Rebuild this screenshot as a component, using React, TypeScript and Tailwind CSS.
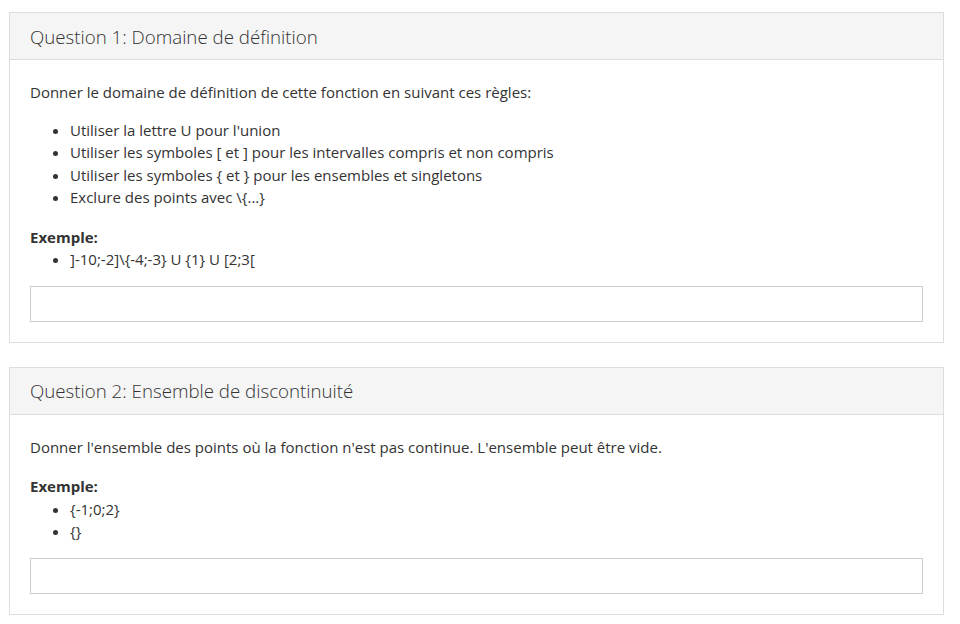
const questions = [
    {
        title: "Question 1: Domaine de définition",
        intro: "Donner le domaine de définition de cette fonction en suivant ces règles:",
        rules: [
            "Utiliser la lettre U pour l'union",
            "Utiliser les symboles [ et ] pour les intervalles compris et non compris",
            "Utiliser les symboles { et } pour les ensembles et singletons",
            "Exclure des points avec \\{...}",
        ],
        examples: ["]-10;-2]\\{-4;-3} U {1} U [2;3["],
    },
    {
        title: "Question 2: Ensemble de discontinuité",
        intro: "Donner l'ensemble des points où la fonction n'est pas continue. L'ensemble peut être vide.",
        rules: [],
        examples: ["{-1;0;2}", "{}"],
    },
];

const QuestionPanel = ({ q }: { q: (typeof questions)[number] }) => {
    return (
        <div className="bg-white border border-[#dddddd]">
            <div className="h-[47px] flex items-center px-5 pt-[2px] bg-[#f5f5f5] border-b border-[#dddddd]">
                <h3 className="text-[18.7px] font-light text-[#333333]">{q.title}</h3>
            </div>
            <div className="px-5 pt-[21px] pb-5 text-[15px] leading-[22.5px] text-[#333333]">
                <p>{q.intro}</p>
                {q.rules.length > 0 &&
                    <ul className="list-disc pl-10 mt-[15px]">
                        {q.rules.map((r, i) => (
                            <li key={i}>{r}</li>
                        ))}
                    </ul>
                }
                <p className="font-bold mt-[17px]">Exemple:</p>
                <ul className="list-disc pl-10">
                    {q.examples.map((e, i) => (
                        <li key={i}>{e}</li>
                    ))}
                </ul>
                <input
                    type="text"
                    className="mt-[15px] block w-full h-[36px] px-3 border border-[#cccccc] bg-white outline-none"
                />
            </div>
        </div>
    );
}

export default function App() {
    return (
        <div className="min-h-[624px] bg-white pt-3 pl-[9px]" style={{ fontFamily: '"Open Sans", sans-serif' }}>
            <div className="w-[935px] flex flex-col gap-[24px]">
                {questions.map((q, i) => (
                    <QuestionPanel key={i} q={q} />
                ))}
            </div>
        </div>
    );
}
